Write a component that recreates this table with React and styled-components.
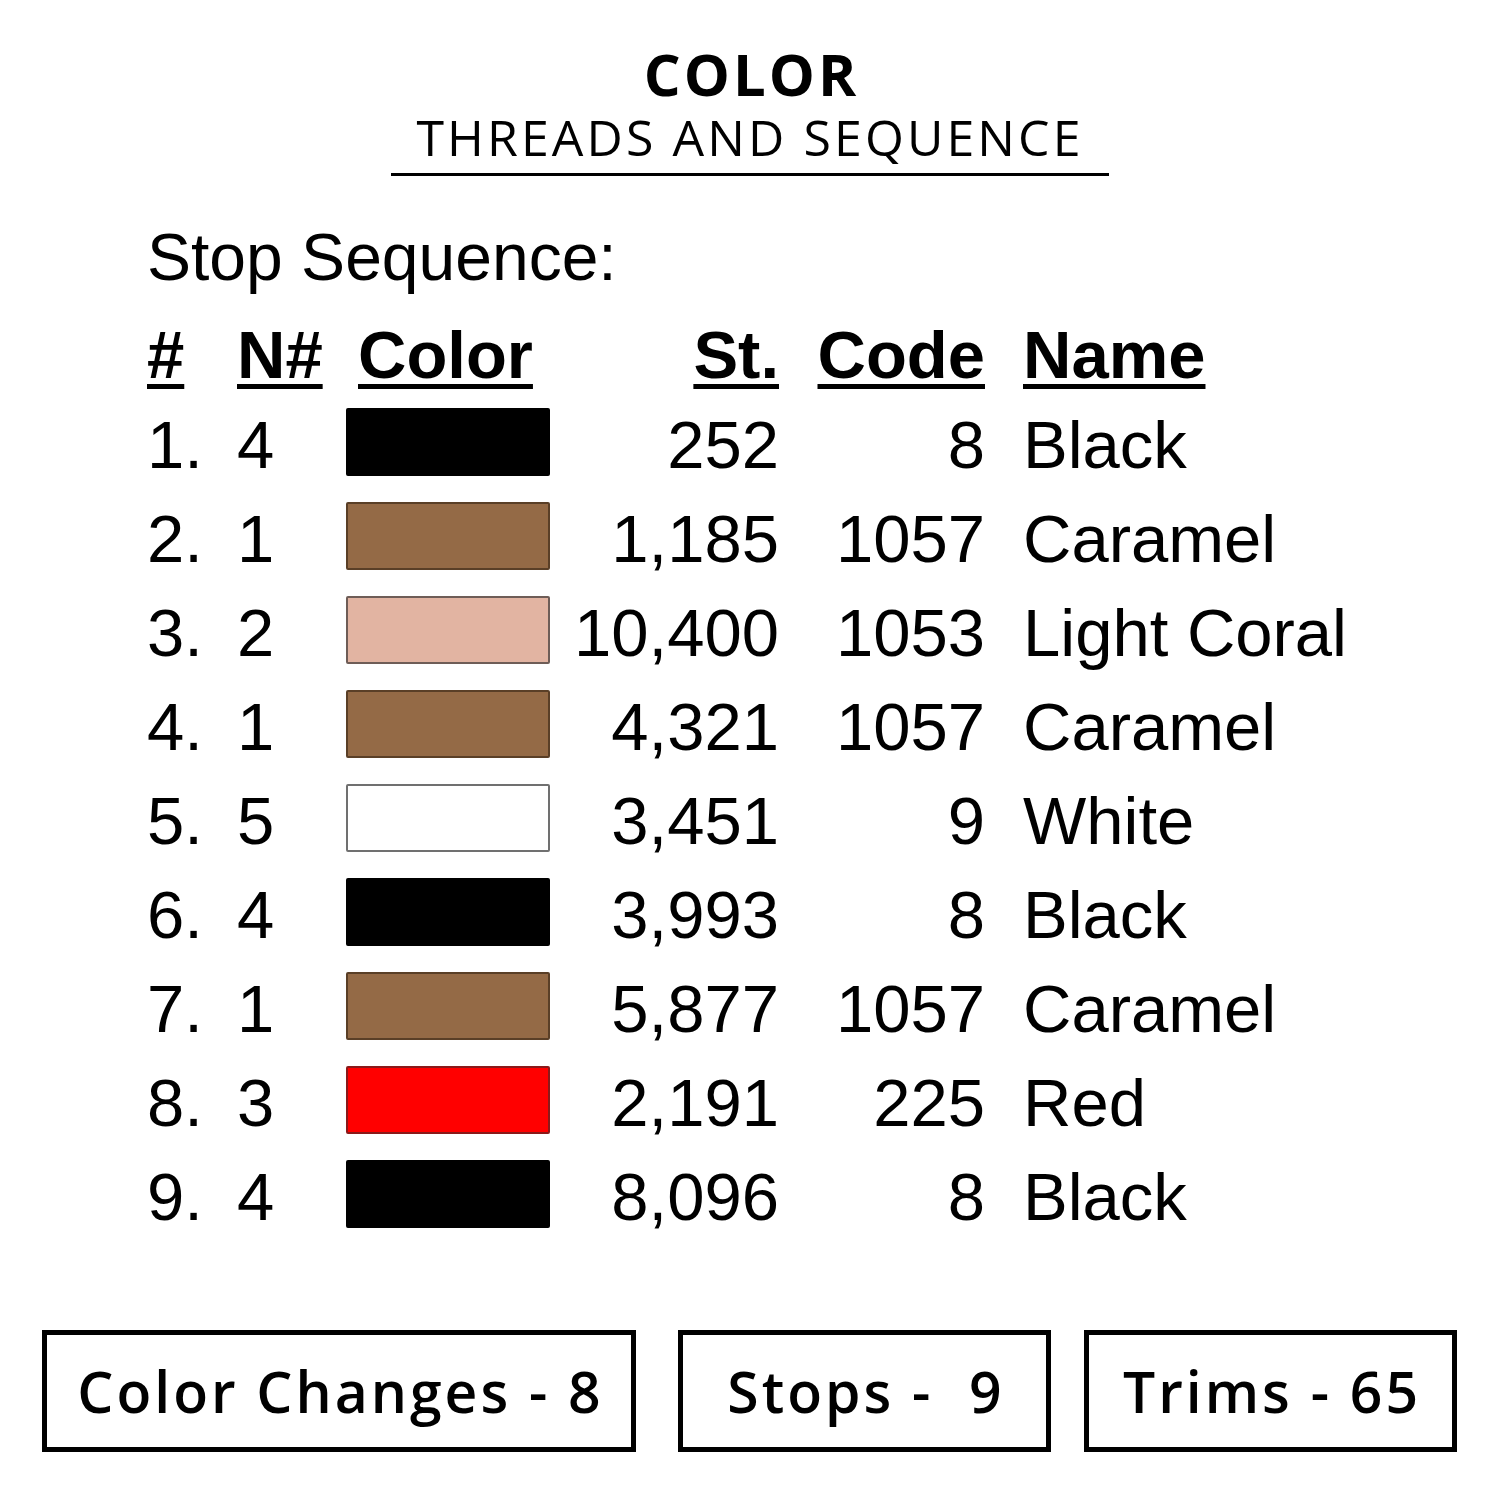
import React from 'react';
import styled, { createGlobalStyle } from 'styled-components';

const GlobalStyle = createGlobalStyle`
  html, body {
    margin: 0;
    padding: 0;
    background: #fff;
  }
`;

const Page = styled.div`
  width: 1500px;
  height: 1500px;
  background: #fff;
  color: #000;
  display: flex;
  flex-direction: column;
  box-sizing: border-box;
  padding-top: 44px;
`;

const Header = styled.header`
  display: flex;
  flex-direction: column;
  align-items: center;
`;

const Title = styled.h1`
  margin: 0;
  padding-left: 3px;
  font-family: 'Open Sans', 'Liberation Sans', sans-serif;
  font-weight: 700;
  font-size: 58px;
  line-height: 60px;
  letter-spacing: 3px;
`;

const Subtitle = styled.h2`
  margin: 8px 0 0;
  padding: 0 25px 11px;
  font-family: 'Open Sans', 'Liberation Sans', sans-serif;
  font-weight: 400;
  font-size: 50px;
  line-height: 50px;
  letter-spacing: 3.1px;
  border-bottom: 3px solid #000;
`;

const Section = styled.section`
  padding-left: 147px;
  margin-top: 48px;
  font-family: 'Liberation Sans', Arial, sans-serif;
  font-size: 66px;
`;

const Label = styled.div`
  line-height: 66px;
  height: 66px;
`;

const Table = styled.div`
  display: grid;
  grid-template-columns: 90px 109px 232px 201px 206px auto;
  grid-auto-rows: 94px;
  grid-template-rows: 86px;
  margin-top: 22px;
  font-size: 67px;
  line-height: 66px;
`;

const HeadCell = styled.div`
  display: flex;
  align-items: center;
  justify-content: ${p => (p.$right ? 'flex-end' : 'flex-start')};
  padding-left: ${p => p.$pad || 0}px;
  font-weight: 700;
  span {
    text-decoration: underline;
    text-decoration-thickness: 5px;
    text-underline-offset: 6px;
  }
`;

const Cell = styled.div`
  display: flex;
  align-items: center;
  justify-content: ${p => (p.$right ? 'flex-end' : 'flex-start')};
  padding-left: ${p => p.$pad || 0}px;
  white-space: nowrap;
`;

const Swatch = styled.div`
  width: 204px;
  height: 68px;
  box-sizing: border-box;
  margin-bottom: 6px;
  border: 2px solid ${p => p.$edge};
  border-radius: 2px;
  background: ${p => p.$fill};
`;

const Stats = styled.div`
  margin: 86px 0 0 42px;
  display: flex;
`;

const StatBox = styled.div`
  width: ${p => p.$w}px;
  height: 122px;
  margin-left: ${p => p.$gap || 0}px;
  box-sizing: border-box;
  border: 5px solid #000;
  display: flex;
  align-items: center;
  justify-content: center;
  padding-left: 3px;
  font-family: 'Open Sans', 'Liberation Sans', sans-serif;
  font-weight: 600;
  font-size: 57px;
  line-height: 58px;
  letter-spacing: 3px;
  white-space: pre;
`;

const stops = [
  { n: 4, fill: '#000000', edge: '#000000', st: '252', code: '8', name: 'Black' },
  { n: 1, fill: '#946a46', edge: '#5a3f27', st: '1,185', code: '1057', name: 'Caramel' },
  { n: 2, fill: '#e2b4a2', edge: '#6e5d57', st: '10,400', code: '1053', name: 'Light Coral' },
  { n: 1, fill: '#946a46', edge: '#5a3f27', st: '4,321', code: '1057', name: 'Caramel' },
  { n: 5, fill: '#ffffff', edge: '#707070', st: '3,451', code: '9', name: 'White' },
  { n: 4, fill: '#000000', edge: '#000000', st: '3,993', code: '8', name: 'Black' },
  { n: 1, fill: '#946a46', edge: '#5a3f27', st: '5,877', code: '1057', name: 'Caramel' },
  { n: 3, fill: '#ff0000', edge: '#8a1a1a', st: '2,191', code: '225', name: 'Red' },
  { n: 4, fill: '#000000', edge: '#000000', st: '8,096', code: '8', name: 'Black' },
];

export default function App() {
  return (
    <Page>
      <GlobalStyle />
      <Header>
        <Title>COLOR</Title>
        <Subtitle>THREADS AND SEQUENCE</Subtitle>
      </Header>

      <Section>
        <Label>Stop Sequence:</Label>
        <Table>
          <HeadCell><span>#</span></HeadCell>
          <HeadCell><span>N#</span></HeadCell>
          <HeadCell $pad={12}><span>Color</span></HeadCell>
          <HeadCell $right><span>St.</span></HeadCell>
          <HeadCell $right><span>Code</span></HeadCell>
          <HeadCell $pad={38}><span>Name</span></HeadCell>

          {stops.map((s, i) => (
            <React.Fragment key={i}>
              <Cell>{i + 1}.</Cell>
              <Cell>{s.n}</Cell>
              <Cell><Swatch $fill={s.fill} $edge={s.edge} /></Cell>
              <Cell $right>{s.st}</Cell>
              <Cell $right>{s.code}</Cell>
              <Cell $pad={38}>{s.name}</Cell>
            </React.Fragment>
          ))}
        </Table>
      </Section>

      <Stats>
        <StatBox $w={594}>Color Changes - 8</StatBox>
        <StatBox $w={373} $gap={42}>{'Stops -  9'}</StatBox>
        <StatBox $w={373} $gap={33}>Trims - 65</StatBox>
      </Stats>
    </Page>
  );
}
